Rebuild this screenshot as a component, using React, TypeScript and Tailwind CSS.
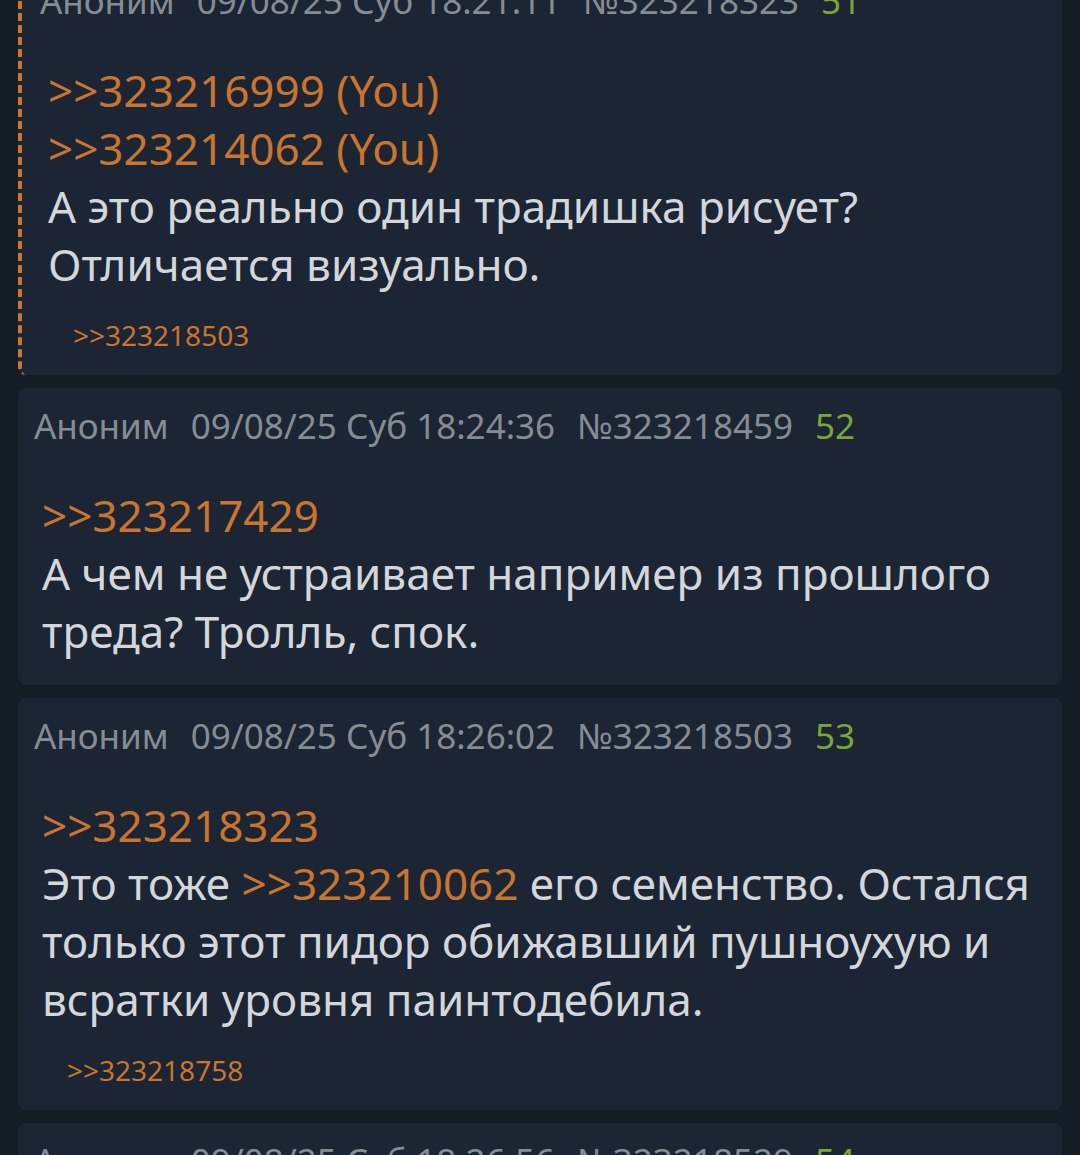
import React from "react";

interface Post {
  num: string;
  date: string;
  index: number;
  replies: string[];
  body: React.ReactNode;
  backlinks: string[];
  highlighted?: boolean;
}

const Link = ({ children }: { children: React.ReactNode }) => (
  <span className="text-[#c9742f]">{children}</span>
);

const posts: Post[] = [
  {
    num: "323218323",
    date: "09/08/25 Суб 18:21:11",
    index: 51,
    replies: [">>323216999 (You)", ">>323214062 (You)"],
    body: (
      <>
        А это реально один традишка рисует?
        <br />
        Отличается визуально.
      </>
    ),
    backlinks: [">>323218503"],
    highlighted: true,
  },
  {
    num: "323218459",
    date: "09/08/25 Суб 18:24:36",
    index: 52,
    replies: [">>323217429"],
    body: <>А чем не устраивает например из прошлого треда? Тролль, спок.</>,
    backlinks: [],
  },
  {
    num: "323218503",
    date: "09/08/25 Суб 18:26:02",
    index: 53,
    replies: [">>323218323"],
    body: (
      <>
        Это тоже <Link>&gt;&gt;323210062</Link> его семенство. Остался только этот пидор
        обижавший пушноухую и всратки уровня паинтодебила.
      </>
    ),
    backlinks: [">>323218758"],
  },
  {
    num: "323218529",
    date: "09/08/25 Суб 18:26:56",
    index: 54,
    replies: [],
    body: <></>,
    backlinks: [],
  },
];

function PostCard({ post }: { post: Post }) {
  return (
    <div
      className={
        "bg-[#1b2533] rounded-lg pt-4 pb-[20px] pr-3 " +
        (post.highlighted ? "pl-[18px] border-l-[4px] border-dashed border-[#c9742f]" : "pl-4")
      }
    >
      <div className="flex gap-[22px] text-[35px] leading-[44px] text-[#878c93] whitespace-nowrap">
        <span>Аноним</span>
        <span>{post.date}</span>
        <span>№{post.num}</span>
        <span className="text-[#7aa53a]">{post.index}</span>
      </div>
      <div className="mt-[38px] mb-[5px] pl-2 text-[44px] leading-[58px] text-[#d3d6da]">
        {post.replies.map((r) => (
          <div key={r}>
            <Link>{r}</Link>
          </div>
        ))}
        <div>{post.body}</div>
      </div>
      {post.backlinks.length > 0 && (
        <div className="mt-[22px] pl-[33px] text-[28px] leading-[40px] text-[#c9742f]">
          {post.backlinks.join(" ")}
        </div>
      )}
    </div>
  );
}

export default function App() {
  return (
    <div
      className="w-[1080px] h-[1155px] overflow-hidden bg-[#141c25]"
      style={{ fontFamily: '"Noto Sans", sans-serif' }}
    >
      <div className="-mt-[37px] px-[18px] flex flex-col gap-[13px]">
        {posts.map((p) => (
          <PostCard key={p.num} post={p} />
        ))}
      </div>
    </div>
  );
}
